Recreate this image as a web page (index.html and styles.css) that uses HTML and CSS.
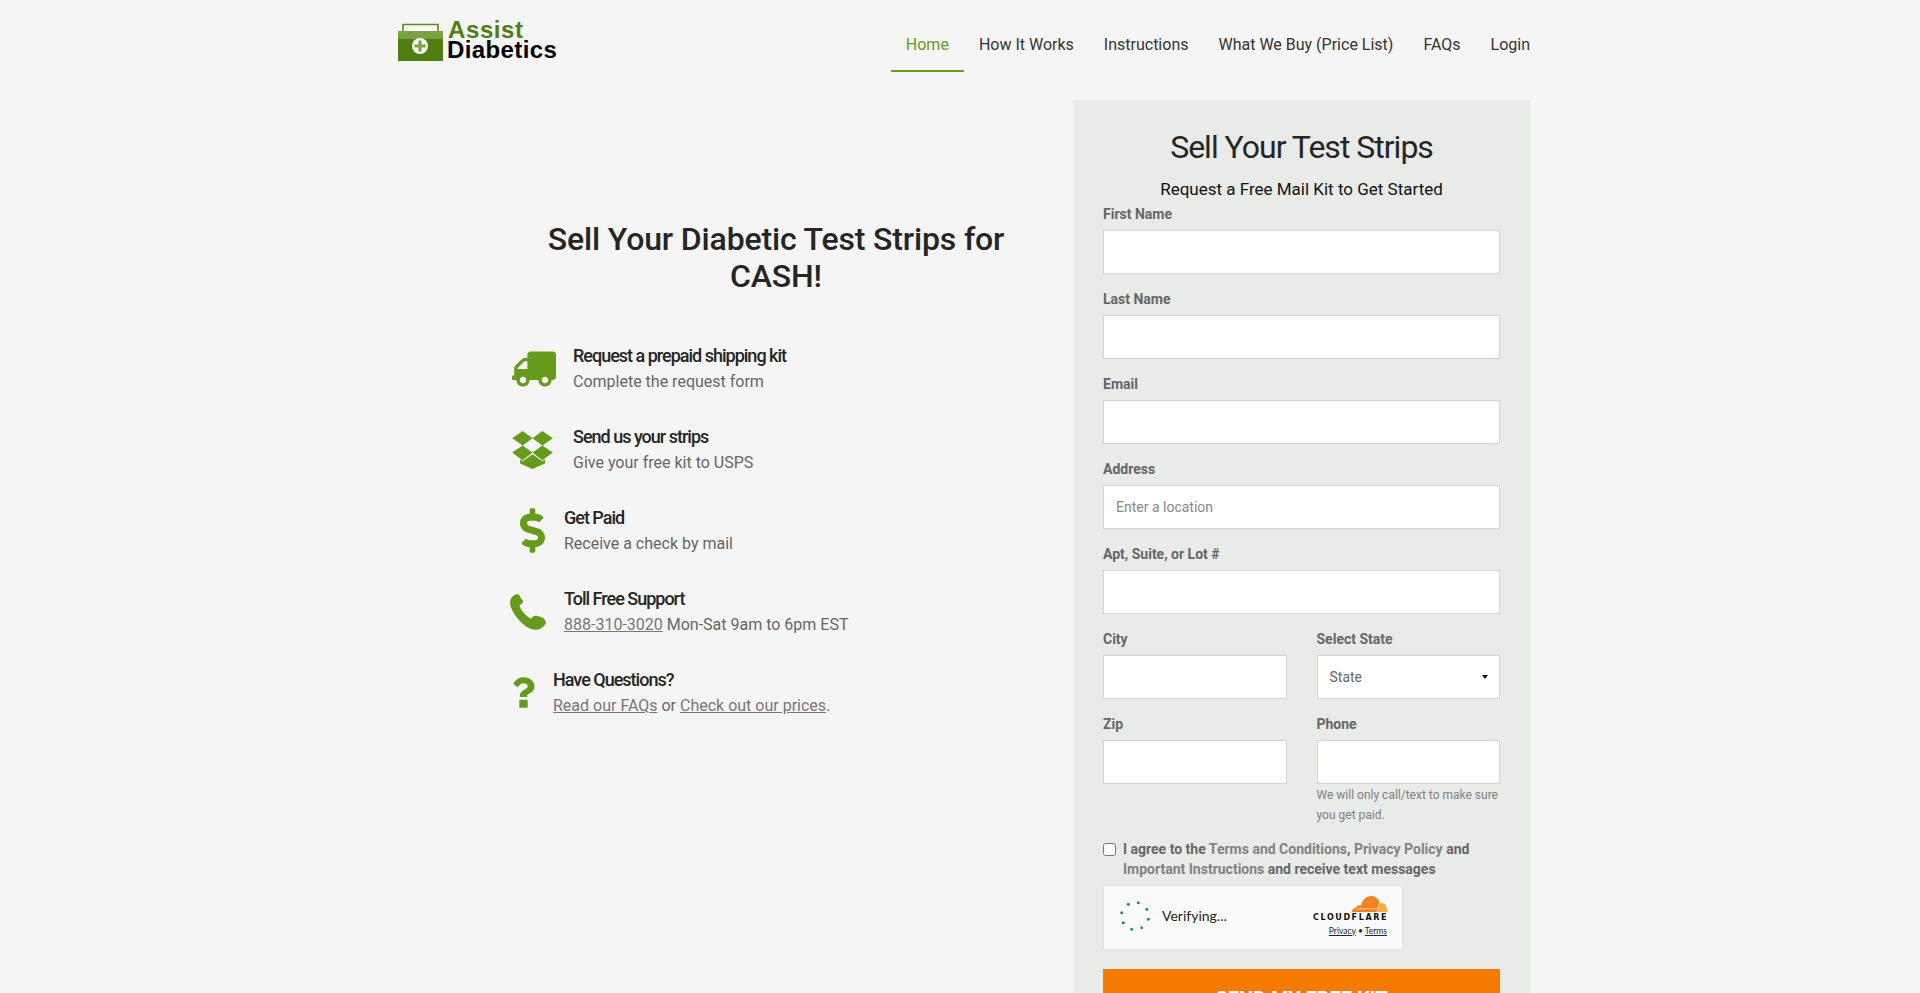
FILE: index.html
```html
<!DOCTYPE html>
<html lang="en">
<head>
    <meta charset="UTF-8">
    <meta name="viewport" content="width=device-width, initial-scale=1.0">
    <title>Assist Diabetics</title>
    <link rel="stylesheet" href="styles.css">
</head>
<body>
    <div class="container">
        <header class="site-header">
            <a class="logo" href="#">
                <svg class="logo-icon" viewBox="0 0 45 38" aria-hidden="true">
                    <path d="M5 10V1.500h35V10" fill="#f7f7f5" stroke="#5c8a1e" stroke-width="1.600"/>
                    <rect x="0" y="8" width="45" height="8" fill="#7ba23f"/>
                    <rect x="0" y="16" width="45" height="22" fill="#4f7f10"/>
                    <circle cx="22" cy="23" r="8" fill="#f4f6ef"/>
                    <path d="M22 17.500v11M16.500 23h11" stroke="#7ba23f" stroke-width="3"/>
                </svg>
                <span class="logo-text">
                    <span class="logo-assist">Assist</span>
                    <span class="logo-diabetics">Diabetics</span>
                </span>
            </a>
            <nav class="main-nav">
                <a class="active" href="#">Home</a>
                <a href="#">How It Works</a>
                <a href="#">Instructions</a>
                <a href="#">What We Buy (Price List)</a>
                <a href="#">FAQs</a>
                <a class="last" href="#">Login</a>
            </nav>
        </header>

        <main class="content">
            <section class="hero">
                <h1>Sell Your Diabetic Test Strips for CASH!</h1>
                <ul class="steps">
                    <li>
                        <svg class="step-icon truck" viewBox="0 0 640 512" aria-hidden="true">
                            <path transform="translate(640 0) scale(-1 1)" d="M624 352h-16V243.900c0-12.700-5.100-24.900-14.100-33.900L494 110.100c-9-9-21.200-14.100-33.900-14.100H416V48c0-26.500-21.500-48-48-48H48C21.500 0 0 21.500 0 48v320c0 26.500 21.500 48 48 48h16c0 53 43 96 96 96s96-43 96-96h128c0 53 43 96 96 96s96-43 96-96h48c8.800 0 16-7.200 16-16v-32c0-8.800-7.200-16-16-16zM160 464c-26.500 0-48-21.500-48-48s21.500-48 48-48 48 21.500 48 48-21.500 48-48 48zm320 0c-26.500 0-48-21.500-48-48s21.500-48 48-48 48 21.500 48 48-21.500 48-48 48zm80-208H416V144h44.100l99.900 99.900V256z"/>
                        </svg>
                        <div>
                            <h3>Request a prepaid shipping kit</h3>
                            <p>Complete the request form</p>
                        </div>
                    </li>
                    <li>
                        <svg class="step-icon box" viewBox="66 296 124 116" aria-hidden="true">
                            <path d="M98 296l30 22-30 22-32-22zM158 296l32 22-32 22-30-22zM98 340l30 22-30 23-32-23zM158 340l32 22-32 23-30-23zM90 382l8 6 30-21 30 21 8-6v13l-38 17-38-17z"/>
                        </svg>
                        <div>
                            <h3>Send us your strips</h3>
                            <p>Give your free kit to USPS</p>
                        </div>
                    </li>
                    <li>
                        <svg class="step-icon dollar" viewBox="0 0 288 512" aria-hidden="true">
                            <path d="M209.200 233.400l-108-31.600C88.700 198.200 80 186.500 80 173.500c0-16.300 13.200-29.500 29.500-29.500h66.300c12.200 0 24.200 3.700 34.200 10.500 6.100 4.100 14.300 3.100 19.500-2l34.800-34c7.100-6.900 6.100-18.400-1.800-24.500C238 74.800 207.400 64.100 176 64V16c0-8.800-7.200-16-16-16h-32c-8.800 0-16 7.200-16 16v48h-2.500C45.800 64-5.400 118.700.5 183.600c4.200 46.100 39.400 83.600 83.800 96.600l102.500 30c12.500 3.700 21.200 15.300 21.200 28.300 0 16.300-13.200 29.500-29.500 29.500h-66.300C100 368 88 364.300 78 357.500c-6.100-4.100-14.300-3.100-19.500 2l-34.800 34c-7.100 6.900-6.100 18.400 1.800 24.500 24.500 19.200 55.100 29.900 86.500 30v48c0 8.800 7.200 16 16 16h32c8.800 0 16-7.200 16-16v-48.200c46.600-.9 90.300-28.600 105.700-72.700 21.500-61.600-14.600-124.800-72.500-141.700z"/>
                        </svg>
                        <div>
                            <h3>Get Paid</h3>
                            <p>Receive a check by mail</p>
                        </div>
                    </li>
                    <li>
                        <svg class="step-icon phone" viewBox="0 0 512 512" aria-hidden="true">
                            <path d="M118 8C100 0 80 2 66 12 30 38 0 70 0 120c0 60 40 140 110 230 75 95 170 160 260 160 50 0 90-28 125-70 14-17 20-36 10-54l-20-30c-8-12-20-20-34-24l-75-22c-20-5-36 0-50 14l-28 28c-50-20-140-115-164-185l34-30c14-12 20-28 14-46L150 52c-5-20-16-36-32-44z"/>
                        </svg>
                        <div>
                            <h3>Toll Free Support</h3>
                            <p><a href="#">888-310-3020</a> Mon-Sat 9am to 6pm EST</p>
                        </div>
                    </li>
                    <li>
                        <svg class="step-icon question" viewBox="0 0 384 512" aria-hidden="true">
                            <path d="M202 0C122 0 70.500 32.700 30 91c-7.400 10.600-5 25 5 33l43 32.700c10.400 7.900 25 6 33.300-4.100 25-31.400 43.600-49.500 82.700-49.500 30.800 0 68.800 19.800 68.800 49.600 0 22.600-18.600 34.100-49 51.200-35.400 19.800-82.300 44.500-82.300 106.400V330h120v-16c0-42.900 125-44.600 125-160.400C377.500 66.300 286.900 0 202 0z"/>
                            <rect x="122" y="376" width="140" height="136" rx="14"/>
                        </svg>
                        <div>
                            <h3>Have Questions?</h3>
                            <p><a href="#">Read our FAQs</a> or <a href="#">Check out our prices</a>.</p>
                        </div>
                    </li>
                </ul>
            </section>

            <aside class="kit-card">
                <h2>Sell Your Test Strips</h2>
                <p class="kit-sub">Request a Free Mail Kit to Get Started</p>
                <form>
                    <div class="field">
                        <label for="first">First Name</label>
                        <input type="text" id="first">
                    </div>
                    <div class="field">
                        <label for="last">Last Name</label>
                        <input type="text" id="last">
                    </div>
                    <div class="field">
                        <label for="email">Email</label>
                        <input type="text" id="email">
                    </div>
                    <div class="field">
                        <label for="address">Address</label>
                        <input type="text" id="address" placeholder="Enter a location">
                    </div>
                    <div class="field">
                        <label for="apt">Apt, Suite, or Lot #</label>
                        <input type="text" id="apt">
                    </div>
                    <div class="field-row">
                        <div class="field">
                            <label for="city">City</label>
                            <input type="text" id="city">
                        </div>
                        <div class="field">
                            <label for="state">Select State</label>
                            <div class="select-wrap">
                                <select id="state">
                                    <option>State</option>
                                </select>
                            </div>
                        </div>
                    </div>
                    <div class="field-row">
                        <div class="field">
                            <label for="zip">Zip</label>
                            <input type="text" id="zip">
                        </div>
                        <div class="field">
                            <label for="phone">Phone</label>
                            <input type="text" id="phone">
                            <small>We will only call/text to make sure you get paid.</small>
                        </div>
                    </div>
                    <label class="agree">
                        <input type="checkbox">
                        <span>I agree to the <a href="#">Terms and Conditions</a>, <a href="#">Privacy Policy</a> and <a href="#">Important Instructions</a> and receive text messages</span>
                    </label>
                    <div class="verify-box">
                        <svg class="spinner" viewBox="0 0 32 32" aria-hidden="true">
                            <circle cx="9.300" cy="4.300" r="1.500"/>
                            <circle cx="19.300" cy="2.700" r="1.500"/>
                            <circle cx="27.700" cy="9.300" r="1.500"/>
                            <circle cx="29.300" cy="19.300" r="1.500"/>
                            <circle cx="22.700" cy="27.700" r="1.500"/>
                            <circle cx="12.700" cy="29.300" r="1.500"/>
                            <circle cx="4.300" cy="22.700" r="1.500"/>
                            <circle cx="2.700" cy="12.700" r="1.500"/>
                        </svg>
                        <span class="verify-text">Verifying...</span>
                        <div class="cf-brand">
                            <svg class="cf-cloud" viewBox="0 0 35 16" aria-hidden="true">
                                <path fill="#f48120" d="M0 16c0-2.500 1.500-4 3.500-4.200C5 9.500 7 9 9 9.500 10.500 3.500 14.500 0 19 0c4.500 0 7.500 2.800 8.500 6.500L24.500 16z"/>
                                <path fill="#faad3f" d="M24.500 16l2.500-8c1-.6 2-1 3-1 3 0 5 3 5 9z"/>
                                <path d="M4 12.800h21.500l1.500-4" fill="none" stroke="#fbe6cf" stroke-width=".7"/>
                            </svg>
                            <span class="cf-name">CLOUDFLARE</span>
                            <span class="cf-links"><a href="#">Privacy</a> &bull; <a href="#">Terms</a></span>
                        </div>
                    </div>
                    <button type="submit">SEND MY FREE KIT</button>
                </form>
            </aside>
        </main>
    </div>
</body>
</html>
```

FILE: styles.css
```css
* {
    margin: 0;
    padding: 0;
    box-sizing: border-box;
}

html, body {
    height: 100vh;
    overflow: hidden;
}

body {
    font-family: Roboto, "Liberation Sans", sans-serif;
    background-color: #f5f5f5;
    color: #252525;
}

.container {
    width: 1132px;
    margin-left: 398px;
}

/* header */
.site-header {
    display: flex;
    justify-content: space-between;
    height: 72px;
}

.logo {
    display: flex;
    align-items: flex-start;
    gap: 4px;
    padding-top: 23px;
    text-decoration: none;
}

.logo-icon {
    width: 45px;
    height: 38px;
}

.logo-text {
    display: flex;
    flex-direction: column;
    font-family: "Liberation Sans", Arial, sans-serif;
    font-size: 24px;
    font-weight: bold;
    line-height: 20px;
    margin-top: -3px;
}

.logo-assist {
    color: #4f7f10;
    margin-left: 1px;
    letter-spacing: 0.6px;
}

.logo-diabetics {
    color: #000;
    letter-spacing: 0.4px;
}

.main-nav {
    display: flex;
}

.main-nav a {
    padding: 0 15px;
    line-height: 90px;
    height: 72px;
    font-size: 16px;
    color: #333;
    text-decoration: none;
}

.main-nav a.active {
    color: #669a1a;
    border-bottom: 2px solid #669a1a;
}

.main-nav a.last {
    padding-right: 0;
}

/* main columns */
.content {
    display: flex;
    justify-content: space-between;
    padding-top: 28px;
}

.hero {
    width: 675px;
    padding: 121px 31px 0 112px;
}

.hero h1 {
    font-size: 32px;
    font-weight: 500;
    line-height: 37px;
    text-align: center;
    letter-spacing: -0.15px;
    margin-bottom: 33px;
}

.steps {
    list-style: none;
}

.steps li {
    display: flex;
    align-items: center;
    height: 81px;
}

.step-icon {
    fill: #669a1a;
    margin-right: 18px;
    flex-shrink: 0;
}

.truck {
    width: 44px;
    height: 36px;
    margin-left: 2px;
    margin-right: 17px;
}

.box {
    width: 41px;
    height: 38px;
    margin-left: 2px;
    margin-right: 20px;
}

.dollar {
    width: 25px;
    height: 45px;
    margin-left: 10px;
    margin-right: 19px;
}

.phone {
    width: 36px;
    height: 36px;
}

.question {
    width: 23px;
    height: 33px;
    margin-left: 2px;
    margin-right: 18px;
}

.steps h3 {
    font-size: 18px;
    font-weight: 500;
    line-height: 26px;
    letter-spacing: -1px;
}

.steps p {
    font-size: 16px;
    line-height: 25px;
    color: #666;
}

.steps a {
    color: #777;
}

/* form card */
.kit-card {
    width: 457px;
    background-color: #e8ebe7;
    padding: 24px 30px 0;
}

.kit-card h2 {
    font-size: 32px;
    font-weight: 400;
    line-height: 46px;
    letter-spacing: -1px;
    text-align: center;
}

.kit-sub {
    font-size: 17px;
    line-height: 26px;
    text-align: center;
    color: #111;
    margin-top: 6px;
    margin-bottom: 2px;
}

.field {
    margin-bottom: 15px;
    flex: 1;
    min-width: 0;
}

.field label {
    display: block;
    font-size: 14px;
    font-weight: 700;
    line-height: 20px;
    color: #666;
    margin-bottom: 6px;
}

.field input,
.field select {
    display: block;
    width: 100%;
    height: 44px;
    padding: 0 12px;
    background-color: #fff;
    border: 1px solid #d2d4d0;
    border-radius: 0;
    font-family: inherit;
    font-size: 14px;
    color: #666;
    appearance: none;
}

.field input::placeholder {
    color: #888;
    opacity: 1;
}

.field-row {
    display: flex;
    gap: 30px;
}

.select-wrap {
    position: relative;
}

.select-wrap::after {
    content: "";
    position: absolute;
    top: 20px;
    right: 12px;
    border-top: 4px solid #111;
    border-left: 3.5px solid transparent;
    border-right: 3.5px solid transparent;
}

.field small {
    display: block;
    font-size: 12px;
    line-height: 20px;
    color: #808080;
    margin-top: 1px;
    margin-bottom: -1px;
}

.agree {
    display: flex;
    align-items: flex-start;
    gap: 7px;
    font-size: 14px;
    font-weight: 700;
    line-height: 20px;
    color: #666;
}

.agree input {
    width: 13px;
    height: 13px;
    margin-top: 4px;
    flex-shrink: 0;
}

.agree a {
    color: #828282;
    text-decoration: none;
}

.verify-box {
    display: flex;
    align-items: center;
    width: 300px;
    height: 65px;
    margin-top: 6px;
    padding: 0 15px 4px;
    background-color: #fafafa;
    border: 1px solid #e0e0e0;
}

.spinner {
    width: 32px;
    height: 32px;
    fill: #1f8f5f;
    margin-right: 11px;
}

.verify-text {
    font-family: Lato, sans-serif;
    font-size: 14px;
    color: #232323;
}

.cf-brand {
    display: flex;
    flex-direction: column;
    align-items: flex-end;
    margin-left: auto;
}

.cf-cloud {
    width: 35px;
    height: 16px;
}

.cf-name {
    font-family: "DejaVu Sans", sans-serif;
    font-size: 8px;
    font-weight: bold;
    letter-spacing: 1.6px;
    line-height: 10px;
    margin-top: 1px;
    margin-right: -1px;
    color: #111;
}

.cf-links {
    font-family: Lato, sans-serif;
    font-size: 8.5px;
    line-height: 10px;
    margin-top: 3px;
    color: #232323;
}

.cf-links a {
    color: #232323;
}

button {
    display: block;
    width: 100%;
    height: 60px;
    margin-top: 19px;
    background-color: #f57a00;
    color: #fff;
    border: none;
    font-family: inherit;
    font-size: 20px;
    font-weight: 700;
}
```
